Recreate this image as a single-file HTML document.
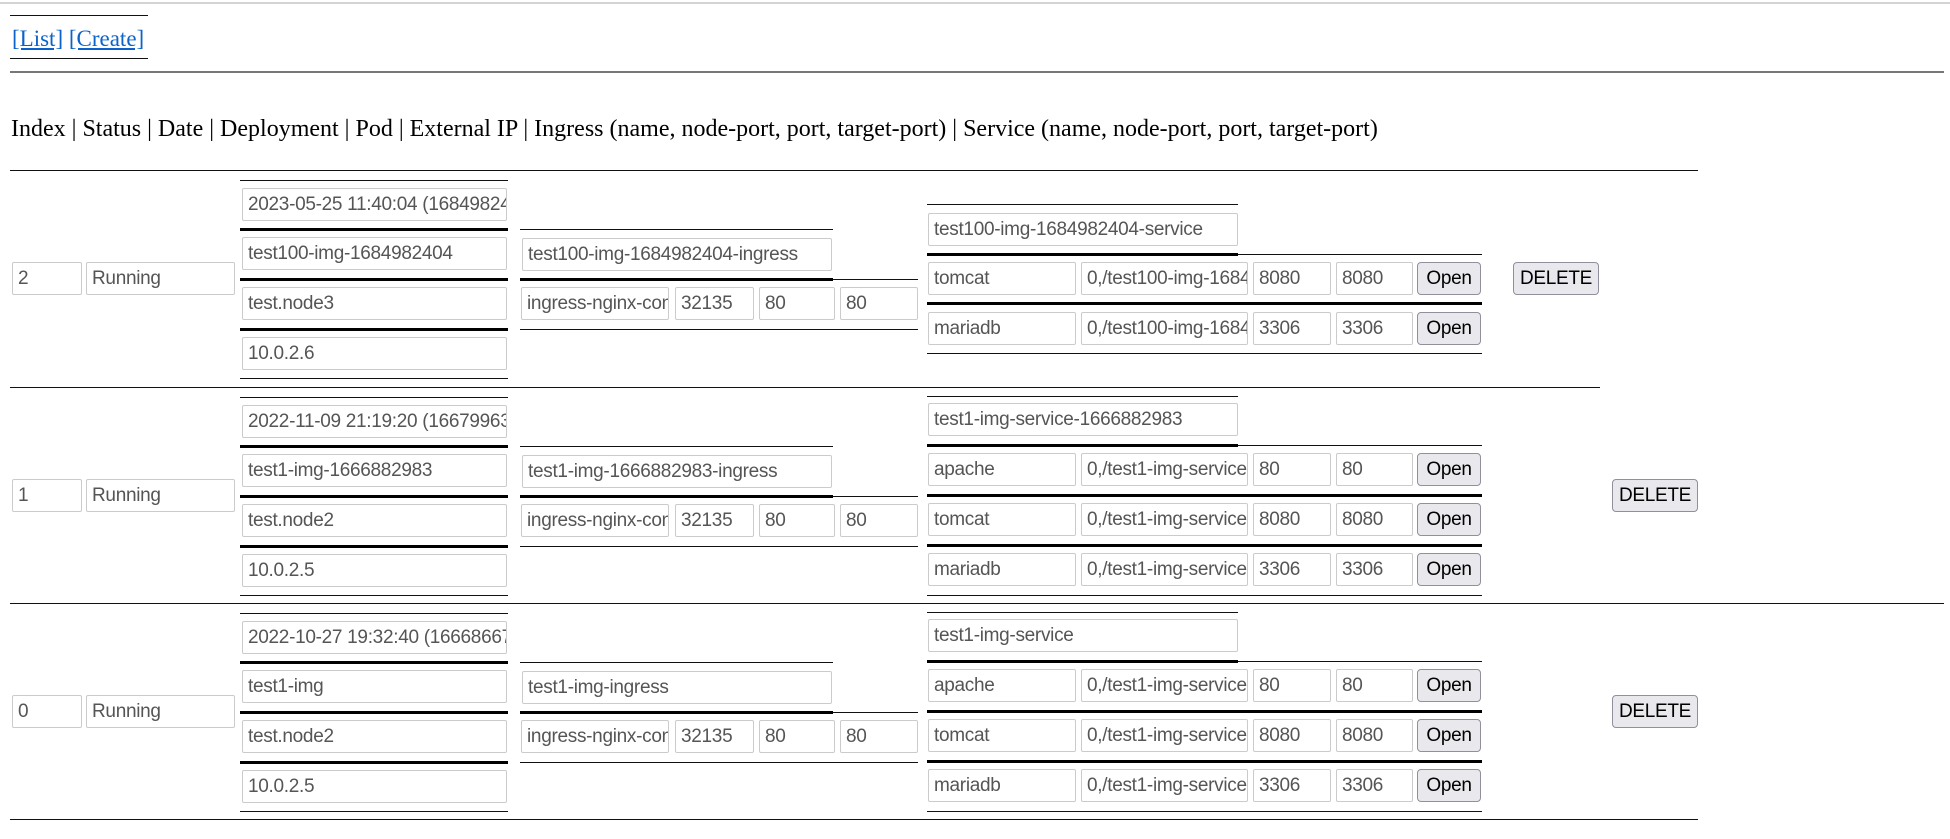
<!DOCTYPE html>
<html><head><meta charset="utf-8"><style>
body{margin:0;width:1950px;height:839px;position:relative;background:#fff;overflow:hidden;font-family:"Liberation Serif",serif}
div{position:absolute;box-sizing:border-box}
.i{height:33px;border:1px solid #cbcbcb;border-radius:2px;padding:0 0 0 5px;font:19px "Liberation Sans",sans-serif;color:#555;line-height:31px;white-space:nowrap;overflow:hidden;letter-spacing:-0.3px}
.l{height:1px;background:#111}
.t{height:3px;background:#000}
.b{height:33px;border:1px solid #8f8f9d;border-radius:4px;background:#e9e9ed;font:19px "Liberation Sans",sans-serif;color:#000;line-height:31px;text-align:center;letter-spacing:-0.3px}
a{color:#0b63c9;text-decoration:underline}
</style></head><body>
<div style="left:0;top:2px;width:1950px;height:2px;background:#d4d4d4"></div>
<div class="l" style="left:10px;top:15px;width:138px"></div>
<div style="left:12px;top:26px;font-size:23px;white-space:nowrap"><a>[List]</a> <a>[Create]</a></div>
<div class="l" style="left:10px;top:58px;width:138px"></div>
<div style="left:10px;top:71px;width:1934px;height:2px;background:#777"></div>
<div style="left:11px;top:116px;font-size:24px;white-space:nowrap">Index | Status | Date | Deployment | Pod | External IP | Ingress (name, node-port, port, target-port) | Service (name, node-port, port, target-port)</div>

<div class="l" style="left:10px;top:170px;width:1688px"></div>
<div class="l" style="left:10px;top:387px;width:1590px"></div>
<div class="l" style="left:10px;top:603px;width:1934px"></div>
<div class="l" style="left:10px;top:819px;width:1688px"></div>

<!-- ROW 1 T=170 -->
<div class="i" style="left:12px;top:262px;width:70px">2</div>
<div class="i" style="left:86px;top:262px;width:149px">Running</div>
<div class="l" style="left:240px;top:180px;width:268px"></div>
<div class="t" style="left:240px;top:228px;width:268px"></div>
<div class="t" style="left:240px;top:278px;width:268px"></div>
<div class="t" style="left:240px;top:328px;width:268px"></div>
<div class="l" style="left:240px;top:378px;width:268px"></div>
<div class="i" style="left:242px;top:188px;width:265px">2023-05-25 11:40:04 (1684982404)</div>
<div class="i" style="left:242px;top:237px;width:265px">test100-img-1684982404</div>
<div class="i" style="left:242px;top:287px;width:265px">test.node3</div>
<div class="i" style="left:242px;top:337px;width:265px">10.0.2.6</div>
<div class="l" style="left:520px;top:229px;width:313px"></div>
<div class="t" style="left:520px;top:278px;width:313px"></div>
<div class="l" style="left:833px;top:279px;width:85px"></div>
<div class="l" style="left:520px;top:329px;width:398px"></div>
<div class="i" style="left:522px;top:238px;width:310px">test100-img-1684982404-ingress</div>
<div class="i" style="left:521px;top:287px;width:148px">ingress-nginx-controller</div>
<div class="i" style="left:675px;top:287px;width:79px">32135</div>
<div class="i" style="left:759px;top:287px;width:76px">80</div>
<div class="i" style="left:840px;top:287px;width:78px">80</div>
<div class="l" style="left:927px;top:204px;width:311px"></div>
<div class="t" style="left:927px;top:253px;width:311px"></div>
<div class="l" style="left:1238px;top:254px;width:244px"></div>
<div class="t" style="left:927px;top:302px;width:555px"></div>
<div class="l" style="left:927px;top:353px;width:555px"></div>
<div class="i" style="left:928px;top:213px;width:310px">test100-img-1684982404-service</div>
<div class="i" style="left:928px;top:262px;width:148px">tomcat</div>
<div class="i" style="left:1081px;top:262px;width:167px">0,/test100-img-1684982404</div>
<div class="i" style="left:1253px;top:262px;width:78px">8080</div>
<div class="i" style="left:1336px;top:262px;width:77px">8080</div>
<div class="b" style="left:1417px;top:262px;width:64px">Open</div>
<div class="i" style="left:928px;top:312px;width:148px">mariadb</div>
<div class="i" style="left:1081px;top:312px;width:167px">0,/test100-img-1684982404</div>
<div class="i" style="left:1253px;top:312px;width:78px">3306</div>
<div class="i" style="left:1336px;top:312px;width:77px">3306</div>
<div class="b" style="left:1417px;top:312px;width:64px">Open</div>
<div class="b" style="left:1513px;top:262px;width:86px">DELETE</div>

<!-- ROW 2 T=387 -->
<div class="i" style="left:12px;top:479px;width:70px">1</div>
<div class="i" style="left:86px;top:479px;width:149px">Running</div>
<div class="l" style="left:240px;top:397px;width:268px"></div>
<div class="t" style="left:240px;top:445px;width:268px"></div>
<div class="t" style="left:240px;top:495px;width:268px"></div>
<div class="t" style="left:240px;top:545px;width:268px"></div>
<div class="l" style="left:240px;top:595px;width:268px"></div>
<div class="i" style="left:242px;top:405px;width:265px">2022-11-09 21:19:20 (1667996360)</div>
<div class="i" style="left:242px;top:454px;width:265px">test1-img-1666882983</div>
<div class="i" style="left:242px;top:504px;width:265px">test.node2</div>
<div class="i" style="left:242px;top:554px;width:265px">10.0.2.5</div>
<div class="l" style="left:520px;top:446px;width:313px"></div>
<div class="t" style="left:520px;top:495px;width:313px"></div>
<div class="l" style="left:833px;top:496px;width:85px"></div>
<div class="l" style="left:520px;top:546px;width:398px"></div>
<div class="i" style="left:522px;top:455px;width:310px">test1-img-1666882983-ingress</div>
<div class="i" style="left:521px;top:504px;width:148px">ingress-nginx-controller</div>
<div class="i" style="left:675px;top:504px;width:79px">32135</div>
<div class="i" style="left:759px;top:504px;width:76px">80</div>
<div class="i" style="left:840px;top:504px;width:78px">80</div>
<div class="l" style="left:927px;top:396px;width:311px"></div>
<div class="t" style="left:927px;top:444px;width:311px"></div>
<div class="l" style="left:1238px;top:445px;width:244px"></div>
<div class="t" style="left:927px;top:494px;width:555px"></div>
<div class="t" style="left:927px;top:544px;width:555px"></div>
<div class="l" style="left:927px;top:595px;width:555px"></div>
<div class="i" style="left:928px;top:403px;width:310px">test1-img-service-1666882983</div>
<div class="i" style="left:928px;top:453px;width:148px">apache</div>
<div class="i" style="left:1081px;top:453px;width:167px">0,/test1-img-service-1666882983</div>
<div class="i" style="left:1253px;top:453px;width:78px">80</div>
<div class="i" style="left:1336px;top:453px;width:77px">80</div>
<div class="b" style="left:1417px;top:453px;width:64px">Open</div>
<div class="i" style="left:928px;top:503px;width:148px">tomcat</div>
<div class="i" style="left:1081px;top:503px;width:167px">0,/test1-img-service-1666882983</div>
<div class="i" style="left:1253px;top:503px;width:78px">8080</div>
<div class="i" style="left:1336px;top:503px;width:77px">8080</div>
<div class="b" style="left:1417px;top:503px;width:64px">Open</div>
<div class="i" style="left:928px;top:553px;width:148px">mariadb</div>
<div class="i" style="left:1081px;top:553px;width:167px">0,/test1-img-service-1666882983</div>
<div class="i" style="left:1253px;top:553px;width:78px">3306</div>
<div class="i" style="left:1336px;top:553px;width:77px">3306</div>
<div class="b" style="left:1417px;top:553px;width:64px">Open</div>
<div class="b" style="left:1612px;top:479px;width:86px">DELETE</div>

<!-- ROW 3 T=603 -->
<div class="i" style="left:12px;top:695px;width:70px">0</div>
<div class="i" style="left:86px;top:695px;width:149px">Running</div>
<div class="l" style="left:240px;top:613px;width:268px"></div>
<div class="t" style="left:240px;top:661px;width:268px"></div>
<div class="t" style="left:240px;top:711px;width:268px"></div>
<div class="t" style="left:240px;top:761px;width:268px"></div>
<div class="l" style="left:240px;top:811px;width:268px"></div>
<div class="i" style="left:242px;top:621px;width:265px">2022-10-27 19:32:40 (1666866760)</div>
<div class="i" style="left:242px;top:670px;width:265px">test1-img</div>
<div class="i" style="left:242px;top:720px;width:265px">test.node2</div>
<div class="i" style="left:242px;top:770px;width:265px">10.0.2.5</div>
<div class="l" style="left:520px;top:662px;width:313px"></div>
<div class="t" style="left:520px;top:711px;width:313px"></div>
<div class="l" style="left:833px;top:712px;width:85px"></div>
<div class="l" style="left:520px;top:762px;width:398px"></div>
<div class="i" style="left:522px;top:671px;width:310px">test1-img-ingress</div>
<div class="i" style="left:521px;top:720px;width:148px">ingress-nginx-controller</div>
<div class="i" style="left:675px;top:720px;width:79px">32135</div>
<div class="i" style="left:759px;top:720px;width:76px">80</div>
<div class="i" style="left:840px;top:720px;width:78px">80</div>
<div class="l" style="left:927px;top:612px;width:311px"></div>
<div class="t" style="left:927px;top:660px;width:311px"></div>
<div class="l" style="left:1238px;top:661px;width:244px"></div>
<div class="t" style="left:927px;top:710px;width:555px"></div>
<div class="t" style="left:927px;top:760px;width:555px"></div>
<div class="l" style="left:927px;top:811px;width:555px"></div>
<div class="i" style="left:928px;top:619px;width:310px">test1-img-service</div>
<div class="i" style="left:928px;top:669px;width:148px">apache</div>
<div class="i" style="left:1081px;top:669px;width:167px">0,/test1-img-service</div>
<div class="i" style="left:1253px;top:669px;width:78px">80</div>
<div class="i" style="left:1336px;top:669px;width:77px">80</div>
<div class="b" style="left:1417px;top:669px;width:64px">Open</div>
<div class="i" style="left:928px;top:719px;width:148px">tomcat</div>
<div class="i" style="left:1081px;top:719px;width:167px">0,/test1-img-service</div>
<div class="i" style="left:1253px;top:719px;width:78px">8080</div>
<div class="i" style="left:1336px;top:719px;width:77px">8080</div>
<div class="b" style="left:1417px;top:719px;width:64px">Open</div>
<div class="i" style="left:928px;top:769px;width:148px">mariadb</div>
<div class="i" style="left:1081px;top:769px;width:167px">0,/test1-img-service</div>
<div class="i" style="left:1253px;top:769px;width:78px">3306</div>
<div class="i" style="left:1336px;top:769px;width:77px">3306</div>
<div class="b" style="left:1417px;top:769px;width:64px">Open</div>
<div class="b" style="left:1612px;top:695px;width:86px">DELETE</div>
</body></html>
